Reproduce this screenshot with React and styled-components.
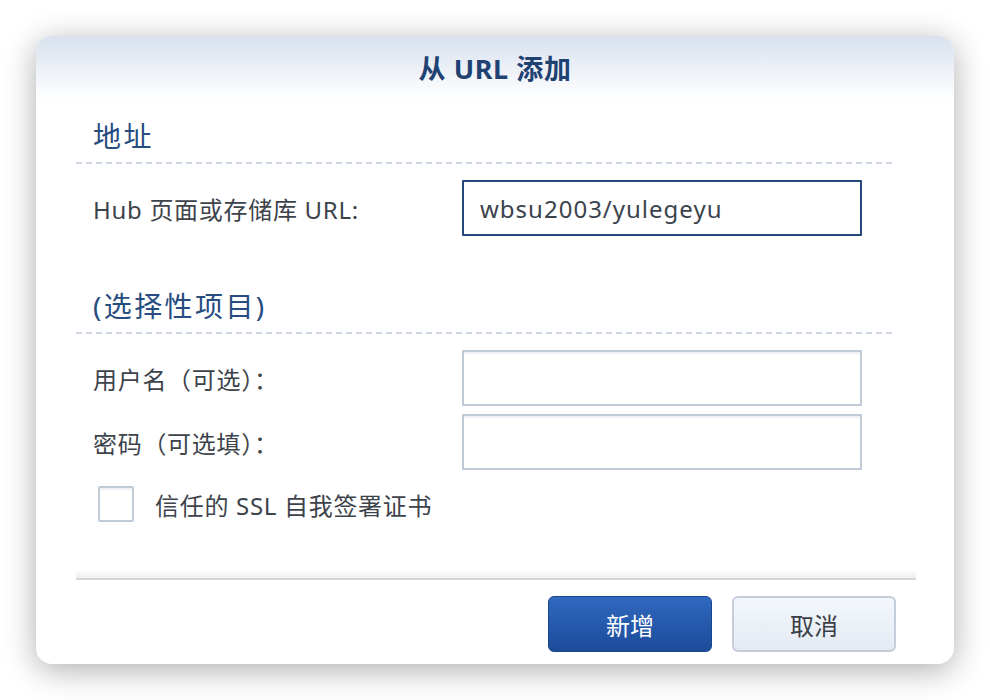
import React from 'react';
import styled, { createGlobalStyle } from 'styled-components';

const GlobalStyle = createGlobalStyle`
  html, body {
    margin: 0;
    padding: 0;
    background: #ffffff;
  }
  body {
    font-family: "Noto Sans", "Noto Sans CJK SC", sans-serif;
  }
  * {
    box-sizing: border-box;
  }
`;

const Page = styled.div`
  padding: 36px;
  width: 990px;
`;

const Dialog = styled.div`
  width: 918px;
  height: 628px;
  background: #fff;
  border-radius: 16px;
  box-shadow: 0 6px 32px rgba(0, 0, 0, 0.32);
  display: flex;
  flex-direction: column;
  overflow: hidden;
`;

const Header = styled.div`
  height: 64px;
  background: linear-gradient(to bottom, #d8e1ed 0%, #eef2f8 55%, #ffffff 100%);
  display: flex;
  align-items: center;
  justify-content: center;
`;

const Title = styled.h1`
  margin: 0;
  font-size: 27px;
  font-weight: 700;
  letter-spacing: 0.6px;
  color: #1f4273;
  line-height: 1;
`;

const Body = styled.div`
  padding: 0 58px 0 40px;
  display: flex;
  flex-direction: column;
`;

const SectionHeading = styled.h2`
  margin: ${p => p.$top}px 0 0;
  padding-left: 17px;
  font-size: 28px;
  font-weight: 400;
  letter-spacing: 2.4px;
  line-height: 36px;
  color: #264c80;
`;

const Dashed = styled.div`
  margin-top: 8px;
  height: 2px;
  background: repeating-linear-gradient(to right, #cdd6e3 0 6px, transparent 6px 10px);
`;

const Row = styled.div`
  display: flex;
  align-items: center;
  padding-left: 17px;
  margin-top: ${p => p.$top}px;
  height: 56px;
`;

const Label = styled.label`
  width: 369px;
  font-size: 24px;
  letter-spacing: 0.7px;
  color: #3d434b;
`;

const Input = styled.input`
  width: 400px;
  height: 56px;
  padding: 0 16px;
  font-family: inherit;
  font-size: 24px;
  letter-spacing: 1px;
  color: #3b434d;
  background: #fff;
  border: 2px solid ${p => (p.$focused ? '#26477a' : '#c0cad6')};
  border-radius: 1px;
  outline: none;
  box-shadow: ${p => (p.$focused ? 'none' : 'inset 0 2px 1px #eef1f5')};
`;

const CheckRow = styled.label`
  display: flex;
  align-items: center;
  gap: 21px;
  margin-top: 16px;
  padding-left: 22px;
  font-size: 24px;
  letter-spacing: 0.7px;
  color: #3d434b;
`;

const Box = styled.span`
  width: 36px;
  height: 36px;
  border: 2px solid #c0cad6;
  border-radius: 2px;
  background: #fff;
  box-shadow: inset 0 2px 1px #eef1f5;
`;

const Footer = styled.div`
  margin-top: auto;
  padding: 0 38px 12px 40px;
  display: flex;
  flex-direction: column;
`;

const Separator = styled.div`
  height: 10px;
  background: linear-gradient(to bottom, #ffffff 0%, #f1f1f1 80%, #f1f1f1 80%);
  border-bottom: 2px solid #d5d5d5;
`;

const Buttons = styled.div`
  display: flex;
  justify-content: flex-end;
  gap: 20px;
  margin-top: 16px;
  padding-right: 20px;
`;

const Button = styled.button`
  width: 164px;
  height: 56px;
  border-radius: 6px;
  font-family: inherit;
  font-size: 24px;
  cursor: pointer;
  ${p =>
    p.$primary
      ? `
    color: #fff;
    background: linear-gradient(to bottom, #3069bf, #1c4b9a);
    border: 1px solid #1a468f;
  `
      : `
    color: #3a3f47;
    background: linear-gradient(to bottom, #f4f8fe, #e4eaf2);
    border: 2px solid #c4cedb;
  `}
`;

export default function App() {
  return (
    <Page>
      <GlobalStyle />
      <Dialog>
        <Header>
          <Title>从 URL 添加</Title>
        </Header>
        <Body>
          <SectionHeading $top={18}>地址</SectionHeading>
          <Dashed />
          <Row $top={16}>
            <Label>Hub 页面或存储库 URL:</Label>
            <Input $focused defaultValue="wbsu2003/yulegeyu" />
          </Row>
          <SectionHeading $top={52}>(选择性项目)</SectionHeading>
          <Dashed />
          <Row $top={16}>
            <Label>用户名（可选）：</Label>
            <Input />
          </Row>
          <Row $top={8}>
            <Label>密码（可选填）：</Label>
            <Input type="password" />
          </Row>
          <CheckRow>
            <Box />
            信任的 SSL 自我签署证书
          </CheckRow>
        </Body>
        <Footer>
          <Separator />
          <Buttons>
            <Button $primary>新增</Button>
            <Button>取消</Button>
          </Buttons>
        </Footer>
      </Dialog>
    </Page>
  );
}
